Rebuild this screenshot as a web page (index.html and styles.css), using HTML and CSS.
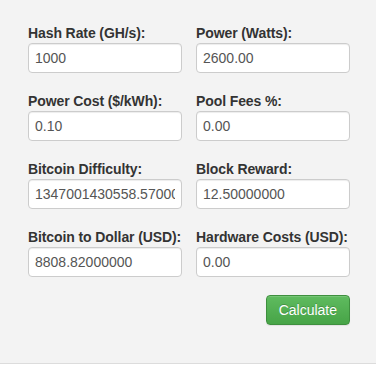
FILE: index.html
```html
<!DOCTYPE html>
<html lang="en">
<head>
    <meta charset="UTF-8">
    <meta name="viewport" content="width=device-width, initial-scale=1.0">
    <title>Mining Calculator</title>
    <link rel="stylesheet" href="styles.css">
</head>
<body>
    <div class="well">
        <form class="calc-form">
            <div class="field">
                <label for="hashRate">Hash Rate (GH/s):</label>
                <input type="text" id="hashRate" value="1000">
            </div>
            <div class="field">
                <label for="power">Power (Watts):</label>
                <input type="text" id="power" value="2600.00">
            </div>
            <div class="field">
                <label for="powerCost">Power Cost ($/kWh):</label>
                <input type="text" id="powerCost" value="0.10">
            </div>
            <div class="field">
                <label for="poolFees">Pool Fees %:</label>
                <input type="text" id="poolFees" value="0.00">
            </div>
            <div class="field">
                <label for="difficulty">Bitcoin Difficulty:</label>
                <input type="text" id="difficulty" value="1347001430558.57000000">
            </div>
            <div class="field">
                <label for="reward">Block Reward:</label>
                <input type="text" id="reward" value="12.50000000">
            </div>
            <div class="field">
                <label for="price">Bitcoin to Dollar (USD):</label>
                <input type="text" id="price" value="8808.82000000">
            </div>
            <div class="field">
                <label for="hardware">Hardware Costs (USD):</label>
                <input type="text" id="hardware" value="0.00">
            </div>
            <div class="actions">
                <button type="button" class="btn-success">Calculate</button>
            </div>
        </form>
    </div>
</body>
</html>
```

FILE: styles.css
```css
body {
    margin: 0;
    background: #fff;
    font-family: "Liberation Sans", Arial, Helvetica, sans-serif;
    font-size: 14px;
    color: #333;
}
.well {
    height: 364px;
    box-sizing: border-box;
    background: #f3f3f3;
    border-bottom: 1px solid #dcdcdc;
    padding: 23px 0 0 28px;
}
.calc-form {
    display: grid;
    grid-template-columns: 154px 154px;
    column-gap: 14px;
    row-gap: 18px;
    width: 322px;
}
.field label {
    display: block;
    font-weight: bold;
    line-height: 20px;
    white-space: nowrap;
    letter-spacing: -0.1px;
    color: #333;
}
.field input {
    display: block;
    width: 100%;
    height: 30px;
    box-sizing: border-box;
    padding: 4px 6px;
    border: 1px solid #ccc;
    border-radius: 4px;
    background: #fff;
    box-shadow: inset 0 1px 1px rgba(0,0,0,0.075);
    font-family: inherit;
    font-size: 14px;
    color: #555;
}
.actions {
    grid-column: 1 / 3;
    display: flex;
    justify-content: flex-end;
}
.btn-success {
    height: 30px;
    padding: 0 12px;
    border: 1px solid #3e8f3e;
    border-radius: 4px;
    background: linear-gradient(#5fbb5f, #47a447);
    box-shadow: inset 0 1px 0 rgba(255,255,255,0.15), 0 1px 1px rgba(0,0,0,0.075);
    color: #fff;
    text-shadow: 0 -1px 0 rgba(0,0,0,0.2);
    font-family: inherit;
    font-size: 14px;
    cursor: pointer;
}
```
